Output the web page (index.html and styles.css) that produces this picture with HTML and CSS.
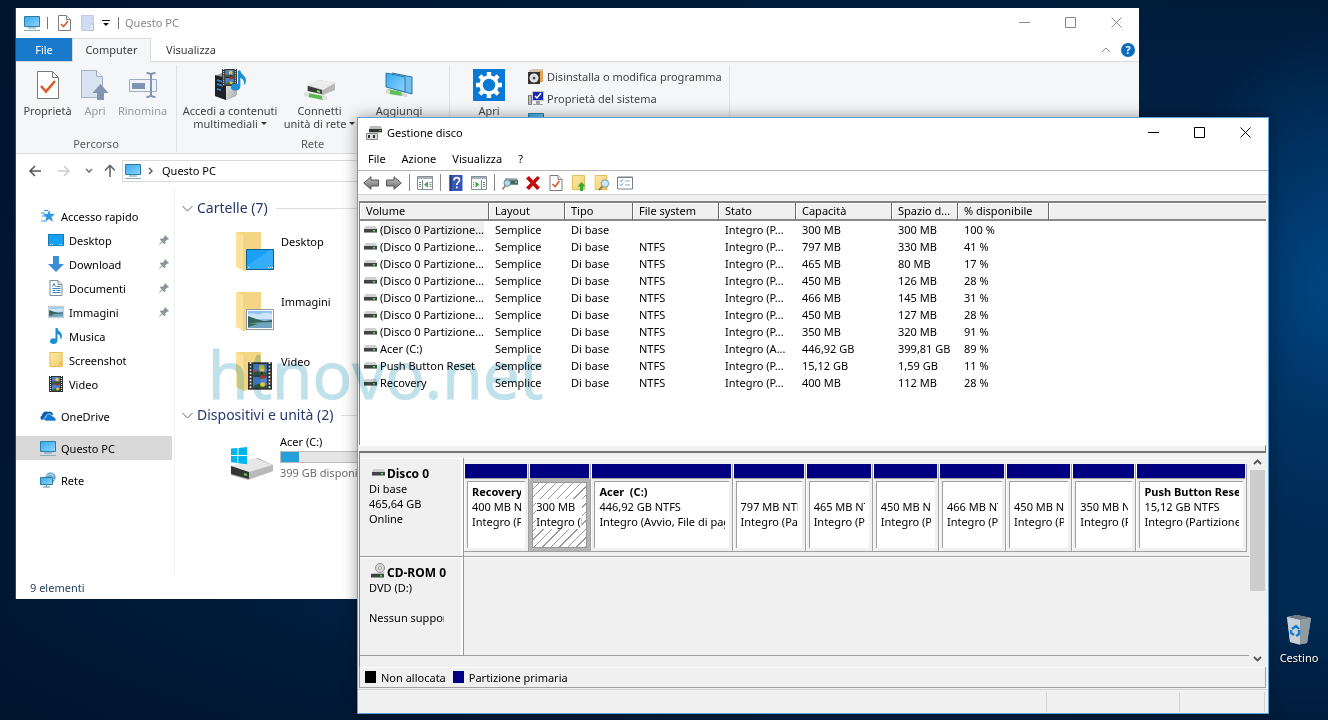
FILE: index.html
```html
<!DOCTYPE html>
<html lang="it">
<head>
<meta charset="utf-8">
<meta name="viewport" content="width=device-width, initial-scale=1">
<title>Gestione disco</title>
<link rel="stylesheet" href="styles.css">
</head>
<body>
<svg class="sprite" aria-hidden="true">
  <defs>
    <linearGradient id="gScreen" x1="0" y1="0" x2="1" y2="1"><stop offset="0" stop-color="#35a9ec"/><stop offset="1" stop-color="#8fd5ff"/></linearGradient>
    <linearGradient id="gFold" x1="0" y1="0" x2="1" y2="1"><stop offset="0" stop-color="#ffeaa8"/><stop offset="1" stop-color="#f0cd6c"/></linearGradient>
    <linearGradient id="gMetal" x1="0" y1="0" x2="1" y2="1"><stop offset="0" stop-color="#f2f2f2"/><stop offset="1" stop-color="#a8a8a8"/></linearGradient>
    <linearGradient id="gArrow" x1="0" y1="0" x2="0" y2="1"><stop offset="0" stop-color="#c4c4c4"/><stop offset="1" stop-color="#6d6d6d"/></linearGradient>
    <symbol id="pc" viewBox="0 0 16 16"><path d="M.5 1.500h15v10H.5z" fill="url(#gScreen)" stroke="#2e7ca8"/><path d="M4 13h8" stroke="#5a9cc4"/><path d="M0 15.500h16" stroke="#8aa9bd"/></symbol>
    <symbol id="doccheck" viewBox="0 0 13 16"><path d="M.5.5h8l4 4v11H.5z" fill="#fff" stroke="#7c7c7c"/><path d="M8.500.5v4h4" fill="#eee" stroke="#7c7c7c"/><path d="M3 9l2.500 2.500L10 6" fill="none" stroke="#d9572b" stroke-width="1.600"/></symbol>
    <symbol id="pagefold" viewBox="0 0 13 16"><path d="M0 0h13v15H0z" fill="url(#gFold)"/><path d="M.5.5h12v14H.5z" fill="none" stroke="#e3be5c"/><path d="M10 10l3-1v6l-3 .5z" fill="#e6c05f"/></symbol>
    <symbol id="bluepage" viewBox="0 0 13 16"><path d="M.5.5h12v15H.5z" fill="#cfdcf2" stroke="#bccbe6"/><path d="M10 9h2.500v6.500H9" fill="#dfe8f8" stroke="#aebfe0"/></symbol>
    <symbol id="prop32" viewBox="0 0 22 28"><path d="M.5.5h15l6 6v21H.5z" fill="#fff" stroke="#7a7a7a"/><path d="M15.500.5v6h6" fill="none" stroke="#7a7a7a"/><path d="M4 15l5 5.500L18 10" fill="none" stroke="#dc5a2c" stroke-width="2.600"/></symbol>
    <symbol id="open32" viewBox="0 0 28 30"><path d="M.5.5h15l6 6v21H.5z" fill="#d9e2f1" stroke="#a3afc4"/><path d="M15.500.5v6h6" fill="#edf2fa" stroke="#a3afc4"/><path d="M19.500 14l8 9h-4.500v7h-7v-7h-4.500z" fill="#8294b2"/></symbol>
    <symbol id="ren32" viewBox="0 0 28 26"><path d="M.5 7.500h27v12H.5z" fill="#f0f3f9" stroke="#9dabc4"/><path d="M3 11h13v6H3z" fill="#8193b3"/><path d="M17.500 1c2 0 4 0 4.500 2 .5-2 2.500-2 4.500-2M22 3v20M17.500 25c2 0 4 0 4.500-2 .5 2 2.500 2 4.500 2" fill="none" stroke="#8193b3" stroke-width="2"/></symbol>
    <symbol id="film" viewBox="0 0 14 16"><path d="M0 0h14v16H0z" fill="#333"/><path d="M3 1h8v6.500H3zM3 8.500h8V15H3z" fill="#4c82cc"/><path d="M3 6l2-1.500L7 6l4-.5v2H3zM3 14l3-1.500 5 1V15H3z" fill="#375c38"/><path d="M3.500 4.500h2v1h-2z" fill="#c8527a"/><ellipse cx="8" cy="3.500" rx="1.700" ry="2" fill="#e9c437"/><path d="M7.500 5.500h1v1.500h-1z" fill="#222"/><ellipse cx="8.500" cy="8.600" rx="2" ry="1" fill="#a33529"/><ellipse cx="8.500" cy="13" rx="1.500" ry="1.300" fill="#e9c437"/><path d="M1.500 0v16M12.500 0v16" stroke="#eee" stroke-dasharray="1 1"/></symbol>
    <symbol id="note" viewBox="0 0 12 16"><path d="M5.500 0h2c0 3 4.500 4 4.500 8 0 1.500-.8 3-1.800 3.700C11 8.500 9.500 6.500 7.500 6v6.500C7.500 15 5.500 16 3.500 16S0 15 0 13.300s1.600-3 3.500-3c.8 0 1.500.2 2 .5z" fill="#1b8fd2"/></symbol>
    <symbol id="media32" viewBox="0 0 32 32"><path d="M1 7l7-3 14 3v20l-10 4L1 27z" fill="#999"/><path d="M1 6l11 3v22L1 27z" fill="#1f2328"/><path d="M12 10l11-4v20l-11 5z" fill="url(#gMetal)"/><path d="M3 11l6 2M3 15l6 2M3 20l4 1" stroke="#2f95e0" stroke-width="1.500"/><use href="#film" x="8" y="0" width="15" height="17"/><use href="#note" x="17" y="1" width="15" height="21"/></symbol>
    <symbol id="netdrive" viewBox="0 0 32 22"><path d="M3 7L15 1l16 3v7l-12 5L3 12z" fill="#b9b9b9"/><path d="M3 6L15 1l16 3-12 7z" fill="#ececec"/><path d="M4 7l14 4v4L4 12z" fill="#3b3d3b"/><path d="M4 14l15 3v4L4 18z" fill="#56bd4e"/><path d="M0 13l5 1v4l-5-1zM18 16l5 1v4l-5-1z" fill="#dedede"/><path d="M13 12l3 1" stroke="#6be36a" stroke-width="2"/></symbol>
    <symbol id="addnet" viewBox="0 0 28 26"><path d="M7 1l20 4v17L9 17z" fill="#70bfee" stroke="#2c77a8"/><path d="M1 1l19 4v15L1 15z" fill="url(#gScreen)" stroke="#2c77a8"/><path d="M3 17l14 3v4L4 22z" fill="#60c057"/><path d="M1 17l4 1v4l-4-1zM16 20l6 2v3l-5-1z" fill="#d8d8d8"/></symbol>
    <symbol id="gear32" viewBox="0 0 32 32"><path d="M0 0h32v32H0z" fill="#0778d4"/><circle cx="16" cy="16" r="8" fill="none" stroke="#fff" stroke-width="3.500"/><path d="M16 3v5M16 24v5M3 16h5M24 16h5M6.800 6.800l3.600 3.600M21.600 21.600l3.600 3.600M25.200 6.800l-3.600 3.600M10.400 21.600l-3.600 3.600" stroke="#fff" stroke-width="4.400"/></symbol>
    <symbol id="uninst" viewBox="0 0 16 16"><path d="M1 2l5-1h9v11l-3 3H1z" fill="#d2c6ae"/><path d="M11 3h4v11h-4z" fill="#e7a553"/><path d="M0 4h12v12H0z" fill="#343434"/><circle cx="6" cy="10" r="4.500" fill="#e2e2e2"/><circle cx="6" cy="10" r="1.500" fill="#555"/></symbol>
    <symbol id="sysprop" viewBox="0 0 16 16"><path d="M.5 5.500h3v9h-3z" fill="#b9bdc5" stroke="#777"/><path d="M4 1h12v10H4z" fill="#c3c8d2"/><path d="M5 2h10v8H5z" fill="#1a2ab8"/><path d="M7 6l2 2 4-5" fill="none" stroke="#fff" stroke-width="1.500"/><path d="M8 11h4v3h3v1H5v-1h3z" fill="#9da2aa"/></symbol>
    <symbol id="star" viewBox="0 0 14 14"><path d="M8 1l1.500 4H14l-3.500 3 1.500 5-4-3-4 3 1.300-5L2 5h4.500z" fill="#2e9be0"/><path d="M0 4h4M1 7h4M0 12h4M3 1.500h4" stroke="#2e9be0"/></symbol>
    <symbol id="desk" viewBox="0 0 16 12"><path d="M.5.5h15v11H.5z" fill="#18a0f4" stroke="#177ab5"/><path d="M2 10.500h3M11 10.500h4" stroke="#fff" stroke-dasharray="1 1"/></symbol>
    <symbol id="desk28" viewBox="0 0 28 21"><path d="M.5.5h27v20H.5z" fill="#18a0f4" stroke="#0e5f92"/><path d="M1 17L24 1h3v19H1z" fill="#35adf8"/><path d="M2 18.500h1M22 18.500h1M24 18.500h1M26 18.500h1" stroke="#fff"/></symbol>
    <symbol id="down" viewBox="0 0 16 16"><path d="M5 0h6v8h5l-8 8-8-8h5z" fill="#3a8fd6"/></symbol>
    <symbol id="docs" viewBox="0 0 13 16"><path d="M.5.5h8l4 4v11H.5z" fill="#fff" stroke="#7d8c96"/><path d="M8.500.5v4h4" fill="none" stroke="#7d8c96"/><path d="M3 6.500l1.500-3 1.500 3M7 6.500h4M3 8.500h8M3 10.500h3M7 10.500h4M3 12.500h8" fill="none" stroke="#3587bb"/></symbol>
    <symbol id="pics" viewBox="0 0 28 21"><path d="M.5.5h27v20H.5z" fill="#fff" stroke="#8c979f"/><path d="M2 2h24v17H2z" fill="#8fc3ee"/><path d="M2 5c5-2 8 1 12 0s8-2 12 0v5H2z" fill="#cfe5f6"/><path d="M2 7l8 3 8 2 8-1v4H2z" fill="#35635c"/><path d="M2 14l24-1v6H2z" fill="#6ea4bd"/><path d="M2 14l10 1-10 3z" fill="#3b6a5a"/></symbol>
    <symbol id="pin" viewBox="0 0 10 10"><path d="M6 0l4 4-1 .7-.7-.2L6.500 6.300 6.300 8.500l-.8.8L3.400 7.200.5 10 0 9.500l2.800-2.900L.7 4.500l.8-.8 2.200-.2 1.800-1.800-.2-.9z" fill="#8b959d"/></symbol>
    <symbol id="cloud" viewBox="0 0 16 10"><path d="M3 9C0 9-.5 5.500 2 4.600 2 2 5-.5 8 1c2-1.500 5 0 5 3" fill="#0c62b2"/><path d="M6.500 10C3 10 3.500 6 6 6c0-3.500 5-4 6-1 2 0 2.500 1 2.500 1.800C16.800 7.500 16.300 10 14.500 10z" fill="#1178cf" stroke="#fff" stroke-width=".7"/></symbol>
    <symbol id="net" viewBox="0 0 16 16"><circle cx="10.500" cy="5.500" r="5.200" fill="#6da8c8"/><path d="M6 3c3 1 4-2 7 0l-1 4 3 1" stroke="#c7e4f0" fill="none"/><path d="M.5 5.500h12v7H.5z" fill="url(#gScreen)" stroke="#2e7ca8"/><path d="M3 15h7M6.500 13v2" stroke="#5a8fb0"/></symbol>
    <symbol id="bigfold" viewBox="0 0 26 42"><path d="M2 1h24v34L9 40z" fill="#f3d583"/><path d="M1 1l8 4v35l-8-4z" fill="#fbe29c"/><path d="M9 5v35" stroke="#efcf7c"/></symbol>
    <symbol id="bigdrive" viewBox="0 0 44 34"><path d="M1 1.500L7.500 1v7H1zM8.500 1L17 0v8H8.500zM1 9h6.500v7L1 15.300zM8.500 9H17v8.200l-8.500-1z" fill="#00b4f0"/><path d="M1 20l27-9 15 7v6L18 33 1 28z" fill="#b5b5b5"/><path d="M1 19l23-8 19 7-24 8z" fill="#e7e7e7"/><path d="M1 19l18 6v7L1 27z" fill="#343634"/><path d="M19 25l24-7v6l-24 8z" fill="#b9b9b9"/><path d="M1 9h16v8.200L1 15.300z" fill="none"/><path d="M8.500 9H17v8.200l-8.500-1z" fill="#00b4f0"/><path d="M14 27l3 1" stroke="#5ed65a" stroke-width="2"/></symbol>
    <symbol id="vol" viewBox="0 0 13 7"><path d="M1.500 0h10L13 2.500v4H0v-4z" fill="#cfcfcf"/><path d="M0 3h13v3.500H0z" fill="#3f4540"/><path d="M9 4h2v1.500H9z" fill="#69d95b"/></symbol>
    <symbol id="cdrom" viewBox="0 0 14 15"><circle cx="9" cy="5" r="4.500" fill="#d8d8d8" stroke="#8e8e8e"/><circle cx="9" cy="5" r="1.500" fill="#fff" stroke="#999"/><path d="M1 10h8l4-1v2H0z" fill="#bcbcbc"/><path d="M0 11h13v3.500H0z" fill="#3f4540"/><path d="M9 12h2v1.500H9z" fill="#69d95b"/></symbol>
    <symbol id="dm" viewBox="0 0 16 14"><path d="M4 0h11l1 3v4H3V3z" fill="#bdbdbd"/><path d="M3 3h13v3H3z" fill="#333"/><path d="M13 4h2v1h-2z" fill="#4fd04a"/><path d="M.5 7.500h11v6H.5z" fill="#dedede" stroke="#8a8a8a"/><path d="M2 9h2v3H2zM7 9h2v3H7z" fill="#333"/></symbol>
    <symbol id="larr" viewBox="0 0 16 14"><path d="M.7 7L8 .7V4h7.500v6H8v3.300z" fill="url(#gArrow)" stroke="#555"/></symbol>
    <symbol id="rarr" viewBox="0 0 16 14"><path d="M15.300 7L8 .7V4H.5v6H8v3.300z" fill="url(#gArrow)" stroke="#555"/></symbol>
    <symbol id="paneL" viewBox="0 0 16 14"><path d="M.5.5h15v13H.5z" fill="#fff" stroke="#868f98"/><path d="M1 2h14" stroke="#a7b1bb" stroke-width="2"/><path d="M5.500 4v9M2 6.500h2M2 8.500h2M2 10.500h2M12.500 6.500h2M12.500 8.500h2M12.500 10.500h2" stroke="#7c8791"/><path d="M11 5.500v6L7 8.500z" fill="#3fae3f"/></symbol>
    <symbol id="paneR" viewBox="0 0 16 14"><path d="M.5.500h15v13H.5z" fill="#fff" stroke="#868f98"/><path d="M1 2h14" stroke="#a7b1bb" stroke-width="2"/><path d="M10.500 4v9M2 6.500h1M2 8.500h1M2 10.500h1M12 6.500h2M12 8.500h2M12 10.500h2" stroke="#7c8791"/><path d="M4.500 5.500v6l4-3z" fill="#3fae3f"/></symbol>
    <symbol id="helpbook" viewBox="0 0 13 16"><path d="M0 0h13v16H0z" fill="#3657b4"/><path d="M0 0h2v16H0z" fill="#20387f"/><path d="M4.500 5.500c0-4 5.500-3.500 5.500-.5C10 7.500 7.300 7.300 7.300 10" fill="none" stroke="#fff" stroke-width="1.600"/><path d="M6.500 11.500h1.700v1.700H6.500z" fill="#fff"/></symbol>
    <symbol id="plug" viewBox="0 0 15 13"><path d="M3 2h11l1 2v4H3z" fill="#9aa0a0"/><path d="M5 4h10v4H5z" fill="#496064"/><path d="M12 5h2v1.500h-2z" fill="#5fe05a"/><circle cx="5" cy="6.500" r="3" fill="#b7d7e6" stroke="#688c9c"/><path d="M3 9l-2.500 3.500" stroke="#9a835f" stroke-width="1.600"/></symbol>
    <symbol id="redx" viewBox="0 0 14 14"><path d="M0 2.500L3 0l4 4.500L11.500 0 14 2 9.500 7l4.500 4.500L11 14 7 9.500 3 14 0 11.500 4.500 7z" fill="#c4080c"/></symbol>
    <symbol id="foldup" viewBox="0 0 14 16"><use href="#pagefold" width="13" height="16"/><path d="M9.500 7l4 4.500h-2.500V16h-3v-4.500H5.500z" fill="#36a836"/></symbol>
    <symbol id="foldfind" viewBox="0 0 15 16"><use href="#pagefold" width="13" height="16"/><circle cx="10.500" cy="8.500" r="3.700" fill="#cfe8f5" stroke="#7c9aaa"/><path d="M8 11.500L4.500 15" stroke="#8c7a55" stroke-width="1.800"/></symbol>
    <symbol id="checks" viewBox="0 0 16 13"><path d="M.5.5h15v12H.5z" fill="#fff" stroke="#72808c"/><path d="M0 1h16" stroke="#72808c"/><path d="M3 4l1 1 2-2M3 8l1 1 2-2" fill="none" stroke="#2a80c4"/><path d="M8 4.500h5M8 8.500h5" stroke="#98a4ae"/></symbol>
    <symbol id="bin" viewBox="0 0 26 30"><path d="M1 2l10-2 14 3-4 25-8 1.500L4 27z" fill="#b9c0c6"/><path d="M1 2l10-2 14 3-11 2z" fill="#6e7881"/><path d="M14 5l11-2-4 25-8 1.500z" fill="#8f9aa3"/><path d="M1 2l13 3v24.500L4 27z" fill="#d0d6da" opacity=".75"/><path d="M6 14l4-3 3 3M13 15l0 4-3 2M8 20l-3-2 0-3" fill="none" stroke="#1580d0" stroke-width="2.400"/></symbol>
  </defs>
</svg>

<main class="desktop">

  <section class="window explorer" aria-label="Questo PC">
    <header class="ex-title">
      <svg class="i16"><use href="#pc"/></svg><span class="vbar"></span>
      <button class="qa" aria-label="Proprietà"><svg class="i13"><use href="#doccheck"/></svg></button>
      <button class="qa" aria-label="Nuova cartella"><svg class="i13"><use href="#bluepage"/></svg></button>
      <button class="qa qa-more" aria-label="Personalizza"><svg viewBox="0 0 8 6" class="i8"><path d="M0 .5h8" stroke="#111"/><path d="M1 3h6L4 6z" fill="#111"/></svg></button>
      <span class="vbar vbar-name"></span><span class="ex-name">Questo PC</span>
      <div class="winctl dim">
        <button aria-label="Riduci"><svg viewBox="0 0 11 11"><path d="M0 5.500h11"/></svg></button>
        <button aria-label="Ingrandisci"><svg viewBox="0 0 11 11"><path d="M.5.5h10v10H.5z"/></svg></button>
        <button aria-label="Chiudi"><svg viewBox="0 0 11 11"><path d="M.5.5l10 10M10.500.5l-10 10"/></svg></button>
      </div>
    </header>
    <nav class="tabs">
      <button class="tab tab-file">File</button>
      <button class="tab tab-on">Computer</button>
      <button class="tab tab-view">Visualizza</button>
      <div class="tabs-end">
        <button aria-label="Comprimi barra"><svg viewBox="0 0 10 6" class="i10"><path d="M1 5l4-4 4 4" fill="none" stroke="#888"/></svg></button>
        <button class="help" aria-label="Guida">?</button>
      </div>
    </nav>
    <div class="ribbon">
      <div class="group g-path">
        <div class="group-items">
          <button class="rb"><svg class="b-prop"><use href="#prop32"/></svg><span>Proprietà</span></button>
          <button class="rb off rb-s"><svg class="b-open"><use href="#open32"/></svg><span>Apri</span></button>
          <button class="rb off"><svg class="b-ren"><use href="#ren32"/></svg><span>Rinomina</span></button>
        </div>
        <div class="group-name">Percorso</div>
      </div>
      <div class="group g-net">
        <div class="group-items">
          <button class="rb rb-l"><svg class="b-32"><use href="#media32"/></svg><span>Accedi a contenuti<br>multimediali <i class="dd"></i></span></button>
          <button class="rb rb-m"><svg class="b-net"><use href="#netdrive"/></svg><span>Connetti<br>unità di rete <i class="dd"></i></span></button>
          <button class="rb rb-m"><svg class="b-add"><use href="#addnet"/></svg><span>Aggiungi</span></button>
        </div>
        <div class="group-name">Rete</div>
      </div>
      <div class="group g-sys">
        <div class="group-items">
          <button class="rb rb-sys"><svg class="b-32"><use href="#gear32"/></svg><span>Apri</span></button>
          <div class="rlist">
            <button><svg class="i16"><use href="#uninst"/></svg>Disinstalla o modifica programma</button>
            <button><svg class="i16"><use href="#sysprop"/></svg>Proprietà del sistema</button>
            <button aria-label="Gestione"><svg class="i16"><use href="#pc"/></svg></button>
          </div>
        </div>
      </div>
    </div>
    <div class="addr">
      <button aria-label="Indietro"><svg viewBox="0 0 14 12"><path d="M13 6H2M7 1L2 6l5 5" stroke="#555"/></svg></button>
      <button aria-label="Avanti"><svg viewBox="0 0 14 12"><path d="M1 6h11M7 1l5 5-5 5" stroke="#ccc"/></svg></button>
      <button class="hist" aria-label="Recenti"><svg viewBox="0 0 8 6"><path d="M1 1l3 3 3-3" stroke="#777"/></svg></button>
      <button class="up" aria-label="Su"><svg viewBox="0 0 12 13"><path d="M6 13V1.500M1 6.500l5-5 5 5" stroke="#666"/></svg></button>
      <div class="crumbs"><svg class="i18"><use href="#pc"/></svg><svg class="sepch" viewBox="0 0 5 8"><path d="M1 1l3 3-3 3" stroke="#555" fill="none" stroke-width="1.400"/></svg><a href="#">Questo PC</a></div>
    </div>
    <div class="ex-body">
      <nav class="tree">
        <a href="#" class="t1"><svg class="i14"><use href="#star"/></svg>Accesso rapido</a>
        <a href="#" class="t2"><svg class="i16"><use href="#desk"/></svg>Desktop<svg class="pin"><use href="#pin"/></svg></a>
        <a href="#" class="t2"><svg class="i16"><use href="#down"/></svg>Download<svg class="pin"><use href="#pin"/></svg></a>
        <a href="#" class="t2"><svg class="i16"><use href="#docs"/></svg>Documenti<svg class="pin"><use href="#pin"/></svg></a>
        <a href="#" class="t2"><svg class="i16"><use href="#pics"/></svg>Immagini<svg class="pin"><use href="#pin"/></svg></a>
        <a href="#" class="t2"><svg class="i16"><use href="#note"/></svg>Musica</a>
        <a href="#" class="t2"><svg class="i16"><use href="#pagefold"/></svg>Screenshot</a>
        <a href="#" class="t2"><svg class="i16"><use href="#film"/></svg>Video</a>
        <a href="#" class="t1 gap"><svg class="i16"><use href="#cloud"/></svg>OneDrive</a>
        <a href="#" class="t1 gap sel"><svg class="i16"><use href="#pc"/></svg>Questo PC</a>
        <a href="#" class="t1 gap"><svg class="i16"><use href="#net"/></svg>Rete</a>
      </nav>
      <div class="files">
        <h2><svg viewBox="0 0 11 7"><path d="M.5 1l5 5 5-5" fill="none" stroke="#666"/></svg>Cartelle (7)</h2>
        <div class="folders">
          <a href="#"><span class="fico"><svg class="ff"><use href="#bigfold"/></svg><svg class="fo"><use href="#desk28"/></svg></span>Desktop</a>
          <a href="#"><span class="fico"><svg class="ff"><use href="#bigfold"/></svg><svg class="fo"><use href="#pics"/></svg></span>Immagini</a>
          <a href="#"><span class="fico"><svg class="ff"><use href="#bigfold"/></svg><svg class="fo fo-film"><use href="#film"/></svg></span>Video</a>
        </div>
        <h2><svg viewBox="0 0 11 7"><path d="M.5 1l5 5 5-5" fill="none" stroke="#666"/></svg>Dispositivi e unità (2)</h2>
        <a href="#" class="drive"><svg class="bd"><use href="#bigdrive"/></svg><span class="dinfo"><span>Acer (C:)</span><span class="meter"><span class="fill" style="width:9%"></span></span><span class="free">399 GB disponibili su 446 GB</span></span></a>
      </div>
    </div>
    <footer class="ex-status"><span>9 elementi</span></footer>
  </section>

  <section class="window disk" aria-label="Gestione disco">
    <header class="dk-title">
      <svg class="i16"><use href="#dm"/></svg><span>Gestione disco</span>
      <div class="winctl">
        <button aria-label="Riduci"><svg viewBox="0 0 11 11"><path d="M0 5.500h11"/></svg></button>
        <button aria-label="Ingrandisci"><svg viewBox="0 0 11 11"><path d="M.5.5h10v10H.5z"/></svg></button>
        <button aria-label="Chiudi"><svg viewBox="0 0 11 11"><path d="M.5.5l10 10M10.500.5l-10 10"/></svg></button>
      </div>
    </header>
    <nav class="menu"><button>File</button><button>Azione</button><button>Visualizza</button><button>?</button></nav>
    <div class="tools">
      <button aria-label="Indietro"><svg class="i16"><use href="#larr"/></svg></button>
      <button aria-label="Avanti"><svg class="i16"><use href="#rarr"/></svg></button><span class="tsep"></span>
      <button aria-label="Mostra albero"><svg class="i16"><use href="#paneL"/></svg></button><span class="tsep"></span>
      <button aria-label="Guida"><svg class="i16"><use href="#helpbook"/></svg></button>
      <button aria-label="Mostra azioni"><svg class="i16"><use href="#paneR"/></svg></button><span class="tsep"></span>
      <button aria-label="Aggiorna"><svg class="i16"><use href="#plug"/></svg></button>
      <button aria-label="Elimina"><svg class="i14"><use href="#redx"/></svg></button>
      <button aria-label="Proprietà"><svg class="i16"><use href="#doccheck"/></svg></button>
      <button aria-label="Apri"><svg class="i16"><use href="#foldup"/></svg></button>
      <button aria-label="Esplora"><svg class="i16"><use href="#foldfind"/></svg></button>
      <button aria-label="Impostazioni"><svg class="i16"><use href="#checks"/></svg></button>
    </div>
    <div class="dk-body">
      <div class="list">
        <table>
          <colgroup><col class="c1"><col class="c2"><col class="c3"><col class="c4"><col class="c5"><col class="c6"><col class="c7"><col class="c8"><col></colgroup>
          <thead><tr><th>Volume</th><th>Layout</th><th>Tipo</th><th>File system</th><th>Stato</th><th>Capacità</th><th>Spazio d...</th><th>% disponibile</th><th></th></tr></thead>
          <tbody>
            <tr class="cur"><td><svg class="vol"><use href="#vol"/></svg><span>(Disco 0 Partizione...</span></td><td>Semplice</td><td>Di base</td><td></td><td>Integro (P...</td><td>300 MB</td><td>300 MB</td><td>100 %</td><td></td></tr>
            <tr><td><svg class="vol"><use href="#vol"/></svg><span>(Disco 0 Partizione...</span></td><td>Semplice</td><td>Di base</td><td>NTFS</td><td>Integro (P...</td><td>797 MB</td><td>330 MB</td><td>41 %</td><td></td></tr>
            <tr><td><svg class="vol"><use href="#vol"/></svg><span>(Disco 0 Partizione...</span></td><td>Semplice</td><td>Di base</td><td>NTFS</td><td>Integro (P...</td><td>465 MB</td><td>80 MB</td><td>17 %</td><td></td></tr>
            <tr><td><svg class="vol"><use href="#vol"/></svg><span>(Disco 0 Partizione...</span></td><td>Semplice</td><td>Di base</td><td>NTFS</td><td>Integro (P...</td><td>450 MB</td><td>126 MB</td><td>28 %</td><td></td></tr>
            <tr><td><svg class="vol"><use href="#vol"/></svg><span>(Disco 0 Partizione...</span></td><td>Semplice</td><td>Di base</td><td>NTFS</td><td>Integro (P...</td><td>466 MB</td><td>145 MB</td><td>31 %</td><td></td></tr>
            <tr><td><svg class="vol"><use href="#vol"/></svg><span>(Disco 0 Partizione...</span></td><td>Semplice</td><td>Di base</td><td>NTFS</td><td>Integro (P...</td><td>450 MB</td><td>127 MB</td><td>28 %</td><td></td></tr>
            <tr><td><svg class="vol"><use href="#vol"/></svg><span>(Disco 0 Partizione...</span></td><td>Semplice</td><td>Di base</td><td>NTFS</td><td>Integro (P...</td><td>350 MB</td><td>320 MB</td><td>91 %</td><td></td></tr>
            <tr><td><svg class="vol"><use href="#vol"/></svg><span>Acer (C:)</span></td><td>Semplice</td><td>Di base</td><td>NTFS</td><td>Integro (A...</td><td>446,92 GB</td><td>399,81 GB</td><td>89 %</td><td></td></tr>
            <tr><td><svg class="vol"><use href="#vol"/></svg><span>Push Button Reset</span></td><td>Semplice</td><td>Di base</td><td>NTFS</td><td>Integro (P...</td><td>15,12 GB</td><td>1,59 GB</td><td>11 %</td><td></td></tr>
            <tr><td><svg class="vol"><use href="#vol"/></svg><span>Recovery</span></td><td>Semplice</td><td>Di base</td><td>NTFS</td><td>Integro (P...</td><td>400 MB</td><td>112 MB</td><td>28 %</td><td></td></tr>
          </tbody>
        </table>
      </div>
      <div class="splitter"></div>
      <div class="map">
        <div class="disks">
          <div class="drow">
            <div class="dlabel"><b><svg class="vol"><use href="#vol"/></svg>Disco 0</b><span>Di base</span><span>465,64 GB</span><span>Online</span></div>
            <div class="parts">
              <div class="part" style="flex-grow:65"><div class="pbox"><div><b>Recovery</b><span>400 MB NTFS</span><span>Integro (Partizione)</span></div></div></div>
              <div class="part chosen" style="flex-grow:62"><div class="pbox"><div><b></b><span>300 MB</span><span>Integro (Partizione)</span></div></div></div>
              <div class="part" style="flex-grow:142"><div class="pbox"><div><b>Acer&nbsp; (C:)</b><span>446,92 GB NTFS</span><span>Integro (Avvio, File di paging)</span></div></div></div>
              <div class="part" style="flex-grow:73"><div class="pbox"><div><b></b><span>797 MB NTFS</span><span>Integro (Partizione)</span></div></div></div>
              <div class="part" style="flex-grow:67"><div class="pbox"><div><b></b><span>465 MB NTFS</span><span>Integro (Partizione)</span></div></div></div>
              <div class="part" style="flex-grow:66"><div class="pbox"><div><b></b><span>450 MB NTFS</span><span>Integro (Partizione)</span></div></div></div>
              <div class="part" style="flex-grow:67"><div class="pbox"><div><b></b><span>466 MB NTFS</span><span>Integro (Partizione)</span></div></div></div>
              <div class="part" style="flex-grow:66"><div class="pbox"><div><b></b><span>450 MB NTFS</span><span>Integro (Partizione)</span></div></div></div>
              <div class="part" style="flex-grow:64"><div class="pbox"><div><b></b><span>350 MB NTFS</span><span>Integro (Partizione)</span></div></div></div>
              <div class="part" style="flex-grow:111"><div class="pbox"><div><b>Push Button Reset</b><span>15,12 GB NTFS</span><span>Integro (Partizione)</span></div></div></div>
            </div>
          </div>
          <div class="drow">
            <div class="dlabel"><b><svg class="cd"><use href="#cdrom"/></svg>CD-ROM 0</b><span>DVD (D:)</span><span></span><span>Nessun supporto</span></div>
            <div class="parts"></div>
          </div>
        </div>
        <div class="scroll">
          <button aria-label="Su"><svg viewBox="0 0 9 6"><path d="M1 5l3.500-3.500L8 5"/></svg></button>
          <div class="track"><div class="thumb"></div></div>
          <button aria-label="Giù"><svg viewBox="0 0 9 6"><path d="M1 1l3.500 3.500L8 1"/></svg></button>
        </div>
      </div>
      <div class="legend"><span class="sw sw-none"></span>Non allocata<span class="sw sw-prim"></span>Partizione primaria</div>
    </div>
    <footer class="dk-status"><span></span><span></span><span></span></footer>
  </section>

  <a href="#" class="bin"><svg><use href="#bin"/></svg>Cestino</a>
  <div class="watermark">htnovo.net</div>
</main>
</body>
</html>
```
FILE: styles.css
```css
* { box-sizing: border-box; }
body {
  margin: 0;
  font: 11px/15px "Noto Sans", "Open Sans", sans-serif;
  color: #000;
}
button { font: inherit; color: inherit; background: none; border: 0; padding: 0; margin: 0; }
a { color: inherit; text-decoration: none; }
h2, b { margin: 0; }
svg { display: block; flex: none; }
.sprite { position: absolute; width: 0; height: 0; }

.desktop {
  position: relative;
  height: 100vh;
  overflow: hidden;
  background:
    radial-gradient(ellipse 170px 260px at 100% 40%, #004683 0%, #003567 45%, rgba(0, 34, 72, 0) 100%),
    linear-gradient(90deg, rgba(0, 18, 42, .8) 0%, rgba(0, 33, 68, .2) 60%, rgba(0, 33, 68, 0) 100%),
    linear-gradient(180deg, #001c3b 0%, #00274f 45%, #002a54 85%, #001c3c 100%);
}
.window { position: absolute; display: flex; flex-direction: column; }
.explorer { left: 15px; top: 8px; right: 189px; bottom: 121px; background: #fff; border-left: 1px solid #33475b; }
.disk {
  left: 357px; top: 117px; right: 59px; bottom: 6px;
  background: #f0f0f0;
  border: 1px solid #5aa3d8;
  box-shadow: 0 0 14px rgba(0, 0, 0, .4);
}

.i8 { width: 8px; height: 6px; }
.i10 { width: 10px; height: 6px; }
.i13 { width: 13px; height: 16px; }
.i14 { width: 14px; height: 14px; }
.i16 { width: 16px; height: 16px; }
.i18 { width: 18px; height: 16px; }

.winctl { display: flex; margin-left: auto; align-self: stretch; }
.winctl button { width: 46px; display: grid; place-items: center; }
.winctl svg { width: 11px; height: 11px; fill: none; stroke: #000; }
.winctl.dim svg { stroke: #888; }

/* explorer */
.ex-title { display: flex; align-items: center; height: 30px; padding: 0 0 1px 8px; }
.vbar { width: 1px; height: 12px; background: #777; margin: 0 10px 0 7px; }
.vbar-name { margin: 0 6px 0 4px; }
.qa { margin-right: 10px; }
.qa-more { margin: 0 4px 0 -2px; }
.ex-name { color: #888; }
.tabs { display: flex; height: 24px; border-bottom: 1px solid #dadbdc; color: #3b3b3b; }
.tab-file { width: 56px; background: #1979ca; color: #fff; height: 23px; }
.tab-on { width: 79px; height: 24px; background: #f5f6f7; border: 1px solid #dadbdc; border-bottom: 0; padding-bottom: 2px; }
.tab-view { width: 80px; }
.tabs-end { display: flex; align-items: center; gap: 10px; margin-left: auto; padding-right: 4px; }
.help { width: 14px; height: 14px; border-radius: 50%; background: #0a6cbd; color: #fff; font-weight: 700; line-height: 14px; }
.ribbon { display: flex; height: 92px; background: #f5f6f7; border-bottom: 1px solid #dadbdc; color: #444; padding: 3px 0 1px; }
.group { display: flex; flex-direction: column; border-right: 1px solid #e0e1e2; }
.g-path { padding-left: 3px; width: 161px; }
.g-net { padding-left: 2px; width: 273px; }
.g-sys { padding-left: 15px; width: 280px; }
.group-items { display: flex; flex: 1; align-items: flex-start; }
.group-name { text-align: center; line-height: 17px; padding-right: 3px; color: #5b5b5b; }
.rb { display: flex; flex-direction: column; align-items: center; justify-content: flex-end; height: 65px; width: 57px; padding-top: 1px; line-height: 13px; white-space: nowrap; }
.rb span { height: 26px; }
.rb svg { margin: auto; }
.rb-s { width: 38px; }
.rb-l { width: 102px; }
.rb-m { width: 77px; }
.rb-m + .rb-m { width: 82px; }
.rb-sys { width: 48px; margin-right: 15px; }
.off { color: #999; }
.b-prop { width: 22px; height: 28px; }
.b-open { width: 28px; height: 30px; }
.b-ren { width: 28px; height: 26px; }
.b-32 { width: 32px; height: 32px; }
.rb .b-net { width: 32px; height: 22px; margin-bottom: 3px; }
.b-add { width: 28px; height: 26px; }
.dd { display: inline-block; border: 3px solid transparent; border-top-color: #333; border-bottom: 0; vertical-align: 3px; }
.rlist { display: flex; flex-direction: column; }
.rlist button { display: flex; align-items: center; gap: 3px; height: 22px; white-space: nowrap; }
.addr { display: flex; align-items: center; height: 34px; padding: 0 0 1px 12px; }
.addr button { width: 14px; margin-right: 15px; }
.addr button svg { fill: none; stroke-width: 1.600; width: 14px; height: 12px; }
.addr .hist { width: 8px; margin: 0 11px 0 -1px; }
.addr .hist svg { width: 8px; height: 6px; }
.addr .up { width: 12px; margin-right: 6px; }
.addr .up svg { width: 12px; height: 13px; }
.crumbs { flex: 1; display: flex; align-items: center; height: 22px; margin-right: 12px; padding-left: 1px; border: 1px solid #d9d9d9; }
.sepch { width: 5px; height: 8px; margin: 0 9px 0 6px; }
.ex-body { display: flex; flex: 1; min-height: 0; }
.tree { width: 159px; padding: 16px 2px 0 0; border-right: 1px solid #f0f0f0; }
.tree a { display: flex; align-items: center; height: 24px; gap: 5px; }
.t1 { padding-left: 24px; }
.tree .t1 .i14 { width: 16px; }
.t2 { padding-left: 32px; }
.tree .gap { margin-top: 8px; }
.tree .sel { background: #d9d9d9; }
.pin { width: 10px; height: 10px; margin-left: auto; margin-right: 3px; }
.files { flex: 1; padding: 8px 0 0 7px; min-width: 0; }
.files h2 { display: flex; align-items: center; gap: 4px; font-size: 14px; font-weight: 400; line-height: 24px; color: #26396f; }
.files h2 svg { width: 11px; height: 7px; }
.files h2::after { content: ""; height: 1px; flex: 1; background: #dedede; margin-left: 4px; }
.folders { display: flex; flex-direction: column; padding: 11px 0 0 53px; }
.folders a { display: flex; gap: 6px; height: 60px; line-height: 21px; }
.folders a:last-child { height: 52px; }
.fico { position: relative; width: 40px; height: 42px; }
.ff { width: 26px; height: 42px; }
.fo { position: absolute; right: 1px; bottom: 3px; width: 28px; height: 21px; }
.fo-film { right: 3px; width: 24px; height: 28px; }
.drive { display: flex; gap: 6px; padding: 7px 0 0 48px; }
.bd { width: 44px; height: 34px; margin-top: 13px; }
.dinfo { display: flex; flex-direction: column; width: 200px; white-space: nowrap; }
.meter { height: 12px; margin: 2px 0; background: #e6e6e6; border: 1px solid #bcbcbc; }
.fill { display: block; height: 10px; background: #26a0da; }
.free { color: #6d6d6d; }
.ex-status { height: 24px; padding-left: 14px; line-height: 25px; color: #1e395b; }

/* disk management */
.dk-title { display: flex; align-items: center; gap: 5px; height: 29px; padding-left: 8px; background: #fff; }
.menu { display: flex; height: 24px; padding-left: 2px; background: #fff; border-bottom: 1px solid #b4b4b4; }
.menu button { padding: 0 8px; }
.tools { display: flex; align-items: center; height: 24px; padding-left: 1px; background: #fff; border-bottom: 1px solid #d4d4d4; }
.tools button { width: 23px; display: grid; place-items: center; }
.tsep { width: 1px; height: 17px; margin: 0 3px 0 4px; background: #8a8a8a; }
.dk-body { display: flex; flex-direction: column; flex: 1; min-height: 0; margin-top: 6px; padding: 0 2px 0 1px; }
.list { flex: 1; background: #fff; border-top: 2px solid #828282; border-left: 1px solid #828282; overflow: hidden; }
.list table { width: 100%; border-collapse: separate; border-spacing: 0; table-layout: fixed; }
.c1 { width: 129px; } .c2 { width: 76px; } .c3 { width: 68px; } .c4 { width: 86px; } .c5 { width: 77px; }
.c6 { width: 96px; } .c7 { width: 66px; } .c8 { width: 91px; }
th { height: 18px; padding: 0 0 0 6px; text-align: left; font-weight: 400; line-height: 16px; background: #f0f0f0; border-right: 1px solid #696969; border-bottom: 2px solid #8a8a8a; box-shadow: inset 1px 1px #fff; white-space: nowrap; }
th:last-child { border-right: 0; }
td { height: 17px; padding: 0 0 0 6px; line-height: 17px; white-space: nowrap; }
td:first-child { display: flex; align-items: center; gap: 3px; padding-left: 4px; }
.cur td:first-child span { background: #f0f0f0; }
.vol { width: 13px; height: 7px; }
.splitter { height: 8px; border-top: 1px solid #fff; border-bottom: 2px solid #777; border-right: 1px solid #777; background: #f0f0f0; }
.map { display: flex; height: 214px; border-left: 1px solid #828282; }
.disks { flex: 1; min-width: 0; padding-top: 5px; }
.drow { display: flex; height: 99px; }
.dlabel { width: 104px; padding: 8px 0 0 9px; display: flex; flex-direction: column; overflow: hidden; border: solid #999; border-width: 0 1px 1px 0; box-shadow: inset 0 1px #fff, inset -2px 0 #fff; }
.dlabel b { display: flex; align-items: center; gap: 2px; padding-left: 3px; font-size: 12px; }
.dlabel .vol { margin-bottom: 3px; }
.dlabel .cd { width: 14px; height: 15px; margin: -5px 0 0 -1px; }
.dlabel span { height: 15px; width: 75px; overflow: hidden; white-space: nowrap; }
.parts { flex: 1; min-width: 0; display: flex; padding: 6px 2px 0 0; border-bottom: 1px solid #a0a0a0; box-shadow: inset 0 1px #fff; }
.part { flex: 0 1 0; min-width: 0; height: 88px; display: flex; flex-direction: column; border: solid #a0a0a0; border-width: 0 1px 1px 0; box-shadow: inset 1px 0 #fff; }
.part::before { content: ""; height: 14px; margin: 0 1px; background: #000080; border-bottom: 1px solid #a0a0a0; flex: none; }
.pbox { flex: 1; margin: 2px 3px 3px 3px; padding: 1px 4px 0 4px; background: #fff; border: solid #a0a0a0; border-width: 1px 0 0 1px; min-width: 0; }
.pbox > div { overflow: hidden; display: flex; flex-direction: column; white-space: nowrap; }
.pbox b { height: 16px; line-height: 18px; }
.pbox span { height: 15px; }
.chosen .pbox { margin: 0; border: 3px solid #b4b4b4; outline: 1px solid #999; outline-offset: -4px; padding: 1px 5px 0 4px; background: repeating-linear-gradient(135deg, #fff 0 5px, #999 5px 6px); }
.chosen .pbox span { background: #fff; }
.scroll { width: 17px; display: flex; flex-direction: column; }
.scroll button { height: 17px; display: grid; place-items: center; }
.scroll svg { width: 9px; height: 6px; fill: none; stroke: #555; stroke-width: 1.800; }
.track { flex: 1; }
.thumb { height: 67%; margin: 0 1px; background: #cdcdcd; }
.legend { display: flex; align-items: center; height: 21px; padding-left: 5px; border: solid #a0a0a0; border-width: 0 1px 1px 1px; box-shadow: inset 0 1px #fff; }
.sw { width: 11px; height: 12px; margin-right: 5px; }
.sw-none { background: #000; }
.sw-prim { background: #000080; margin-left: 7px; }
.dk-status { display: flex; justify-content: flex-end; height: 24px; padding: 2px 3px 1px 0; margin-top: 1px; border-top: 1px solid #d4d4d4; }
.dk-status span { border-right: 1px solid #d2d2d2; width: 85px; }
.dk-status span:first-child { flex: 1; }
.dk-status span:nth-child(2) { width: 133px; }

.bin { position: absolute; right: 4px; bottom: 55px; width: 50px; display: flex; flex-direction: column; align-items: center; gap: 5px; color: #fff; text-shadow: 0 1px 2px #000; }
.bin svg { width: 26px; height: 30px; }
.watermark { position: absolute; left: 208px; top: 325px; font-family: "Open Sans", sans-serif; font-size: 66px; line-height: 96px; color: #bfe1ea; -webkit-text-stroke: 1px #bfe1ea; mix-blend-mode: multiply; pointer-events: none; }
```
